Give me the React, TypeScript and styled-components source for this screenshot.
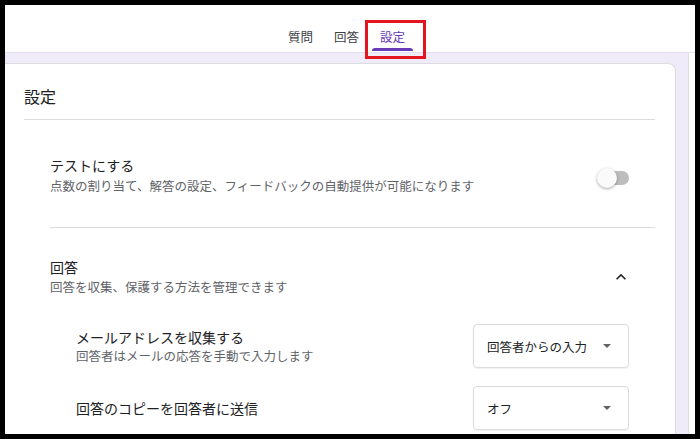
import styled, { createGlobalStyle } from "styled-components";
import { FC } from "react";

const GlobalStyle = createGlobalStyle`
  html, body {
    margin: 0;
    padding: 0;
    background: #fff;
  }
  body {
    font-family: "Noto Sans CJK JP", "Noto Sans", sans-serif;
    color: #202124;
  }
`;

const Frame = styled.div`
  width: 700px;
  height: 439px;
  box-sizing: border-box;
  border: 5px solid #000;
  overflow: hidden;
  display: flex;
  flex-direction: column;
  background: #fff;
`;

const Header = styled.div`
  height: 47px;
  flex-shrink: 0;
  display: flex;
  align-items: flex-end;
  justify-content: center;
  padding-right: 7px;
  gap: 5px;
  position: relative;
  z-index: 2;
`;

const Tab = styled.div<{ $active?: boolean }>`
  position: relative;
  display: flex;
  flex-direction: column;
  align-items: stretch;
  padding-bottom: 1px;
  cursor: pointer;

  span {
    padding: 0 8px;
    font-size: 12.5px;
    line-height: 18px;
    margin-bottom: 2px;
    color: ${(p) => (p.$active ? "#673ab7" : "#3c4043")};
  }

  i {
    display: block;
    height: 3px;
    border-radius: 3px 3px 0 0;
    background: ${(p) => (p.$active ? "#673ab7" : "transparent")};
  }
`;

const Highlight = styled.div`
  position: absolute;
  left: -7px;
  right: -13px;
  top: -8px;
  bottom: -7px;
  border: 3px solid #e3161f;
  pointer-events: none;
`;

const Main = styled.div`
  flex: 1;
  display: flex;
  min-height: 0;
  border-top: 1px solid #e4dff0;
`;

const Canvas = styled.div`
  flex: 1;
  background: #f0ebf8;
  padding: 10px 12px 0 0;
  min-width: 0;
`;

const ScrollTrack = styled.div`
  width: 6px;
  background: #fff;
  border-left: 1px solid #dedbe6;
`;

const Card = styled.div`
  background: #fff;
  border: 1px solid #dadce0;
  border-left: none;
  border-radius: 0 8px 0 0;
  padding: 20px 20px 60px 19px;
`;

const CardTitle = styled.div`
  font-size: 16px;
  line-height: 24px;
  color: #202124;
  padding-bottom: 11px;
  border-bottom: 1px solid #dadce0;
`;

const Section = styled.div<{ $divider?: boolean }>`
  margin-left: 26px;
  padding: ${(p) => (p.$divider ? "35px 26px 32px 0" : "29px 26px 0 0")};
  border-bottom: ${(p) => (p.$divider ? "1px solid #dadce0" : "none")};
`;

const Row = styled.div`
  display: flex;
  align-items: center;
  justify-content: space-between;
`;

const TextBlock = styled.div`
  display: flex;
  flex-direction: column;
`;

const Title = styled.div`
  font-size: 14px;
  line-height: 20px;
  color: #202124;
`;

const Subtitle = styled.div<{ $gap?: number }>`
  font-size: 12.5px;
  line-height: 18px;
  color: #5f6368;
  margin-top: ${(p) => p.$gap ?? 0}px;
`;

const Switch = styled.div`
  margin-top: 5px;
  display: flex;
  align-items: center;
`;

const Thumb = styled.div`
  width: 20px;
  height: 20px;
  border-radius: 50%;
  background: #fafafa;
  box-shadow: 0 1px 3px rgba(0, 0, 0, 0.35);
  position: relative;
  z-index: 1;
`;

const Track = styled.div`
  width: 24px;
  height: 14px;
  margin-left: -12px;
  border-radius: 7px;
  background: #bdbdbd;
`;

const Chevron = styled.svg`
  width: 20px;
  height: 20px;
  margin-right: -2px;
  fill: #202124;
`;

const SubItems = styled.div`
  padding-left: 26px;
  margin-top: 28px;
  display: flex;
  flex-direction: column;
  gap: 18px;
`;

const Select = styled.div`
  width: 156px;
  height: 44px;
  box-sizing: border-box;
  border: 1px solid #dadce0;
  border-radius: 4px;
  box-shadow: 0 1px 1px rgba(60, 64, 67, 0.08);
  display: flex;
  align-items: center;
  justify-content: space-between;
  padding: 0 17px 0 13px;
  font-size: 12.5px;
  color: #202124;
  flex-shrink: 0;
`;

const Caret = styled.span`
  width: 0;
  height: 0;
  border-left: 4px solid transparent;
  border-right: 4px solid transparent;
  border-top: 4px solid #5f6368;
`;

const App: FC = () => {
  return (
    <>
      <GlobalStyle />
      <Frame>
        <Header>
          <Tab>
            <span>質問</span>
            <i />
          </Tab>
          <Tab>
            <span>回答</span>
            <i />
          </Tab>
          <Tab $active>
            <span>設定</span>
            <i />
            <Highlight />
          </Tab>
        </Header>
        <Main>
          <Canvas>
            <Card>
              <CardTitle>設定</CardTitle>
              <Section $divider>
                <Row>
                  <TextBlock>
                    <Title>テストにする</Title>
                    <Subtitle $gap={2}>
                      点数の割り当て、解答の設定、フィードバックの自動提供が可能になります
                    </Subtitle>
                  </TextBlock>
                  <Switch>
                    <Thumb />
                    <Track />
                  </Switch>
                </Row>
              </Section>
              <Section>
                <Row>
                  <TextBlock>
                    <Title>回答</Title>
                    <Subtitle $gap={1}>回答を収集、保護する方法を管理できます</Subtitle>
                  </TextBlock>
                  <Chevron viewBox="0 0 24 24">
                    <path d="M12 8l-6 6 1.41 1.41L12 10.83l4.59 4.58L18 14z" />
                  </Chevron>
                </Row>
                <SubItems>
                  <Row>
                    <TextBlock>
                      <Title>メールアドレスを収集する</Title>
                      <Subtitle>回答者はメールの応答を手動で入力します</Subtitle>
                    </TextBlock>
                    <Select>
                      回答者からの入力
                      <Caret />
                    </Select>
                  </Row>
                  <Row>
                    <TextBlock>
                      <Title>回答のコピーを回答者に送信</Title>
                    </TextBlock>
                    <Select>
                      オフ
                      <Caret />
                    </Select>
                  </Row>
                </SubItems>
              </Section>
            </Card>
          </Canvas>
          <ScrollTrack />
        </Main>
      </Frame>
    </>
  );
};

export default App;
